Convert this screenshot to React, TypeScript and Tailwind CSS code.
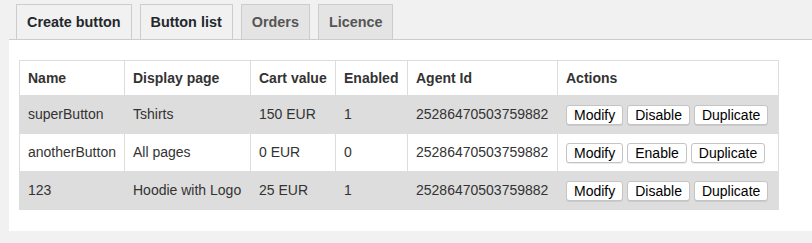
const tabs = [
  { label: "Create button", active: true },
  { label: "Button list", active: true },
  { label: "Orders", active: false },
  { label: "Licence", active: false },
];

const rows = [
  { name: "superButton", page: "Tshirts", cart: "150 EUR", enabled: "1", agent: "25286470503759882", toggle: "Disable" },
  { name: "anotherButton", page: "All pages", cart: "0 EUR", enabled: "0", agent: "25286470503759882", toggle: "Enable" },
  { name: "123", page: "Hoodie with Logo", cart: "25 EUR", enabled: "1", agent: "25286470503759882", toggle: "Disable" },
];

export default function App() {
  return (
    <div className="min-h-[243px] bg-[#f1f1f1] pt-[4px] font-['Liberation_Sans',Arial,sans-serif] text-[14px] text-[#333]">
      {/* Tabs */}
      <div className="ml-[16px] flex gap-[8px]">
        {tabs.map((t) => (
          <div
            key={t.label}
            className={
              t.active
                ? "h-[35px] border border-b-0 border-[#cccccc] bg-[#f1f1f1] px-[10px] text-[14.4px] leading-[35px] font-bold text-[#23282d]"
                : "h-[35px] border border-b-0 border-[#cccccc] bg-[#e4e4e4] px-[10px] text-[14.4px] leading-[35px] font-bold text-[#555]"
            }
          >
            {t.label}
          </div>
        ))}
      </div>

      {/* Panel */}
      <div className="ml-[9px] border-t border-[#cccccc] bg-white pb-[21px] pl-[10px] pt-[20px]">
        <table className="w-[759px] table-fixed border-collapse">
          <thead>
            <tr className="h-[35px] bg-white">
              <Th w="w-[105px]">Name</Th>
              <Th w="w-[126px]">Display page</Th>
              <Th w="w-[85px]">Cart value</Th>
              <Th w="w-[72px]">Enabled</Th>
              <Th w="w-[150px]">Agent Id</Th>
              <Th w="w-[221px]">Actions</Th>
            </tr>
          </thead>
          <tbody>
            {rows.map((r, i) => (
              <tr key={i} className={i % 2 === 0 ? "h-[38px] bg-[#dddddd]" : "h-[38px] bg-white"}>
                <Td>{r.name}</Td>
                <Td>{r.page}</Td>
                <Td>{r.cart}</Td>
                <Td>{r.enabled}</Td>
                <Td>{r.agent}</Td>
                <td className="border border-[#dddddd] px-[8px] whitespace-nowrap">
                  <div className="flex gap-[4px]">
                    <Btn>Modify</Btn>
                    <Btn>{r.toggle}</Btn>
                    <Btn>Duplicate</Btn>
                  </div>
                </td>
              </tr>
            ))}
          </tbody>
        </table>
      </div>
    </div>
  );
}

function Th({ w, children }: { w: string; children: React.ReactNode }) {
  return (
    <th className={`${w} border border-[#dddddd] px-[8px] text-left font-bold text-[#333]`}>
      {children}
    </th>
  );
}

function Td({ children }: { children: React.ReactNode }) {
  return <td className="border border-[#dddddd] px-[8px] whitespace-nowrap text-[#333]">{children}</td>;
}

function Btn({ children }: { children: React.ReactNode }) {
  return (
    <button className="h-[20px] rounded-[3px] border border-[#c4c4c4] bg-white px-[7px] text-[14px] leading-[18px] text-black shadow-[0_1px_0_rgba(0,0,0,0.08)]">
      {children}
    </button>
  );
}
